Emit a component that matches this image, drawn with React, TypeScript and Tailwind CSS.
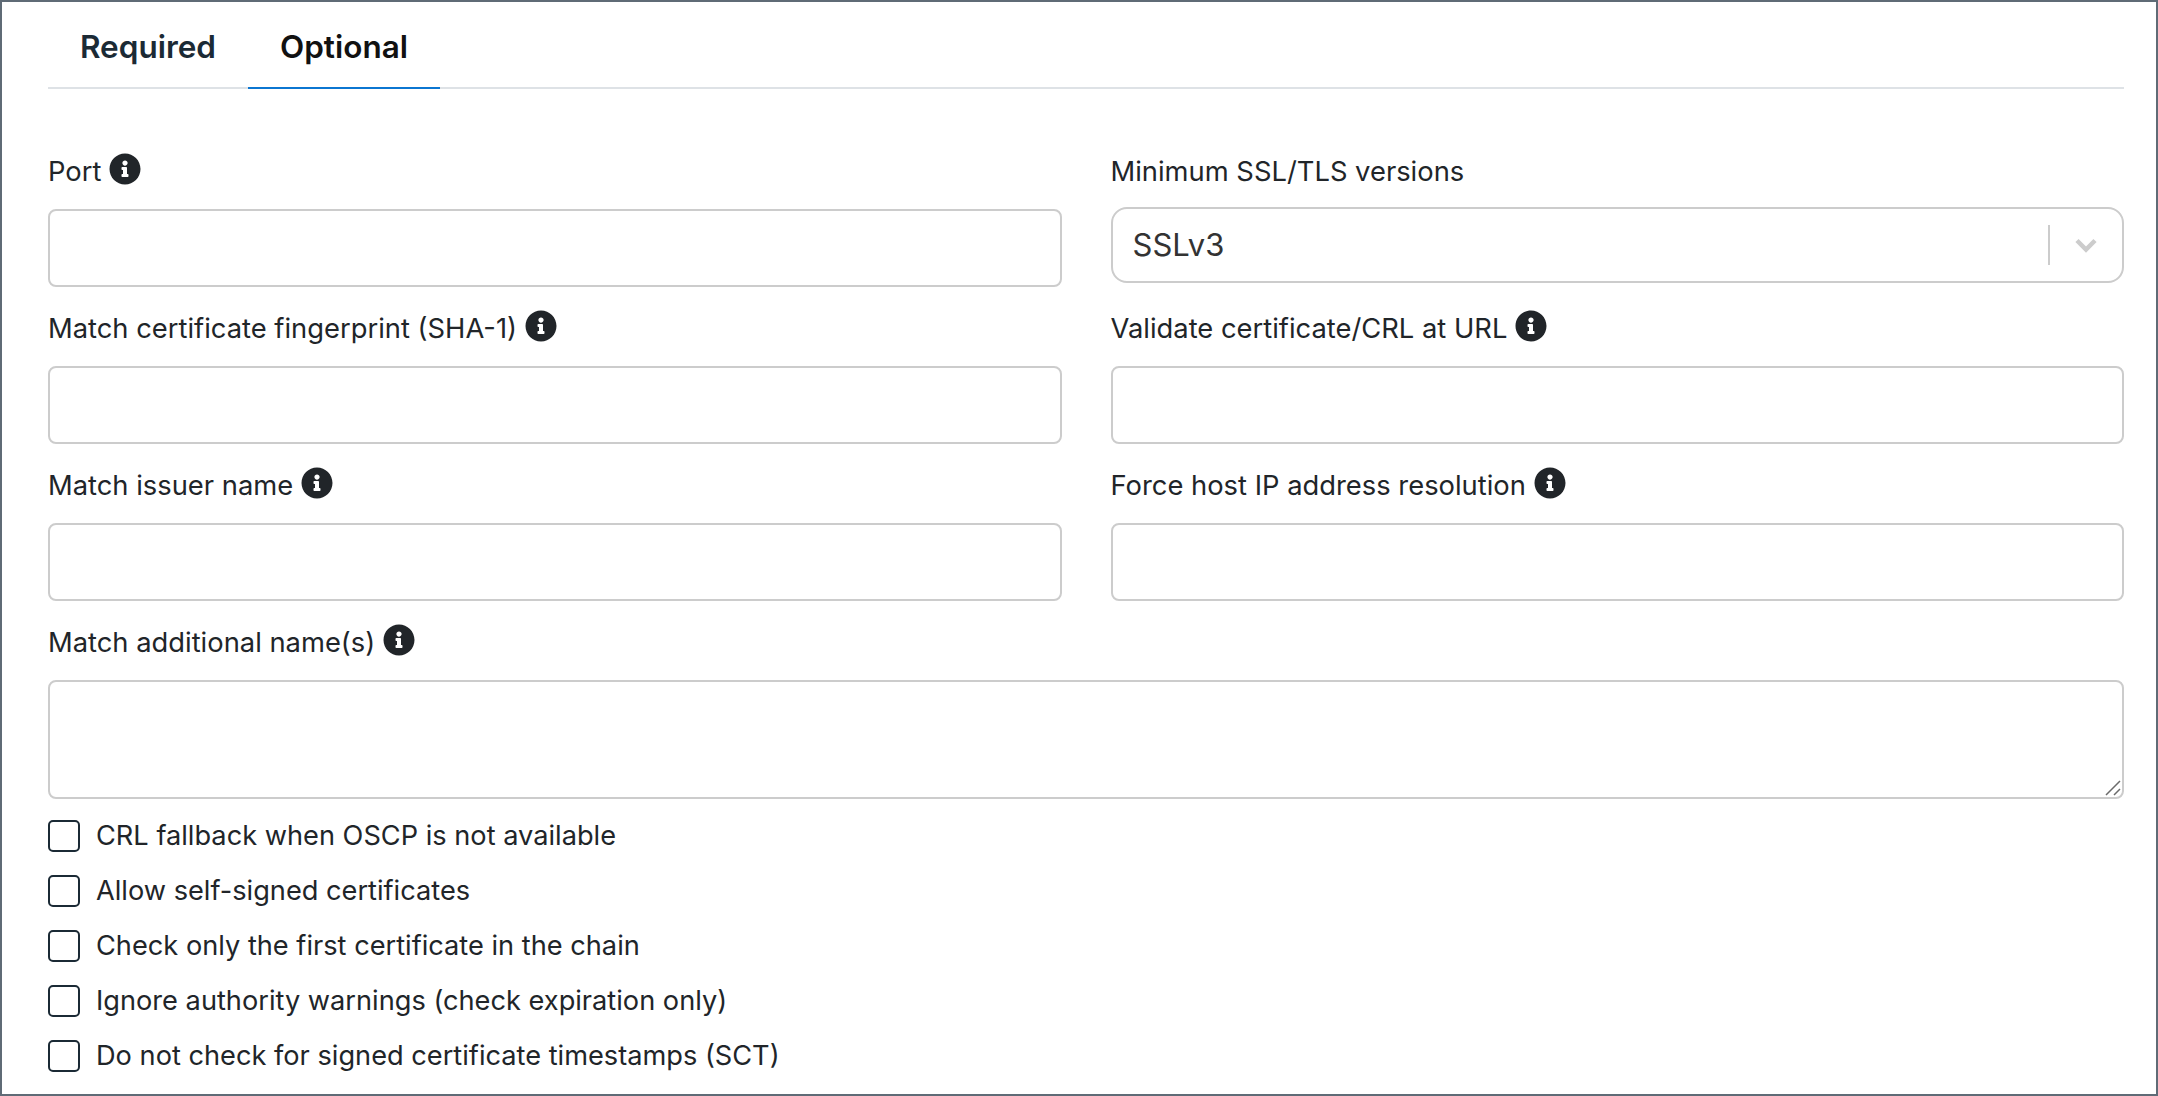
import { FaInfoCircle } from "react-icons/fa";

const font = { fontFamily: "Inter, sans-serif" };

function Info() {
  return <FaInfoCircle className="ml-[8px] h-[32px] w-[32px] shrink-0 -translate-y-[3px] text-[#212529]" />;
}

function Label({ text, info = true }: { text: string; info?: boolean }) {
  return (
    <div className="flex h-[36px] items-center text-[27.35px] leading-[36px] text-[#212529]">
      <span>{text}</span>
      {info && <Info />}
    </div>
  );
}

function Field({ text, info = true }: { text: string; info?: boolean }) {
  return (
    <div className="flex h-[157px] flex-col">
      <div className="mt-[17px]"><Label text={text} info={info} /></div>
      <input className="mt-[19px] h-[78px] w-full rounded-[8px] border-2 border-[#cccccc] bg-white" />
    </div>
  );
}

function Check({ text }: { text: string }) {
  return (
    <label className="flex h-[55px] items-start">
      <span className="h-[32px] w-[32px] shrink-0 rounded-[5px] border-2 border-[#1b2a35] bg-white" />
      <span className="ml-[16px] text-[27.2px] leading-[32px] text-[#212529]">{text}</span>
    </label>
  );
}

export default function App() {
  return (
    <div style={font} className="h-[1096px] w-[2158px] overflow-hidden border-2 border-[#5f6b76] bg-white pl-[46px] pr-[32px]">
      <div className="flex h-[87px] border-b-2 border-[#dee2e6]">
        <div className="flex h-[87px] w-[200px] items-center justify-center pt-[3px] text-[31.5px] font-semibold text-[#1b2a35]">Required</div>
        <div className="flex h-[87px] w-[192px] items-center justify-center border-b-2 border-[#0b76d1] pt-[5px] text-[31.5px] font-semibold text-[#111111]">Optional</div>
      </div>
      <div className="mt-[48px] grid grid-cols-2 gap-x-[49px]">
        <div className="flex flex-col">
          <Field text="Port" />
          <Field text="Match certificate fingerprint (SHA-1)" />
          <Field text="Match issuer name" />
        </div>
        <div className="flex flex-col">
          <div className="flex h-[157px] flex-col">
            <div className="mt-[17px]"><Label text="Minimum SSL/TLS versions" info={false} /></div>
            <div className="mt-[17px] flex h-[76px] w-full items-center rounded-[16px] border-2 border-[#cccccc] bg-white pl-[20px]">
              <span className="grow text-[31px] text-[#333333]">SSLv3</span>
              <span className="h-[40px] w-[2px] bg-[#cccccc]" />
              <svg className="mx-[24px] h-[16px] w-[24px]" viewBox="0 0 24 16" fill="none">
                <path d="M3 3.5 12 12.5 21 3.5" stroke="#cccccc" strokeWidth="4.5" />
              </svg>
            </div>
          </div>
          <Field text="Validate certificate/CRL at URL" />
          <Field text="Force host IP address resolution" />
        </div>
      </div>
      <div className="mt-[17px]">
        <Label text="Match additional name(s)" />
        <div className="relative mt-[19px] h-[119px] w-full rounded-[8px] border-2 border-[#cccccc] bg-white">
          <svg className="absolute bottom-[1px] right-[1px] h-[16px] w-[16px]" viewBox="0 0 16 16" stroke="#6b6b6b" strokeWidth="1.5">
            <path d="M1 15 15 1M9 15 15 9" />
          </svg>
        </div>
      </div>
      <div className="mt-[21px] flex flex-col">
        <Check text="CRL fallback when OSCP is not available" />
        <Check text="Allow self-signed certificates" />
        <Check text="Check only the first certificate in the chain" />
        <Check text="Ignore authority warnings (check expiration only)" />
        <Check text="Do not check for signed certificate timestamps (SCT)" />
      </div>
    </div>
  );
}
